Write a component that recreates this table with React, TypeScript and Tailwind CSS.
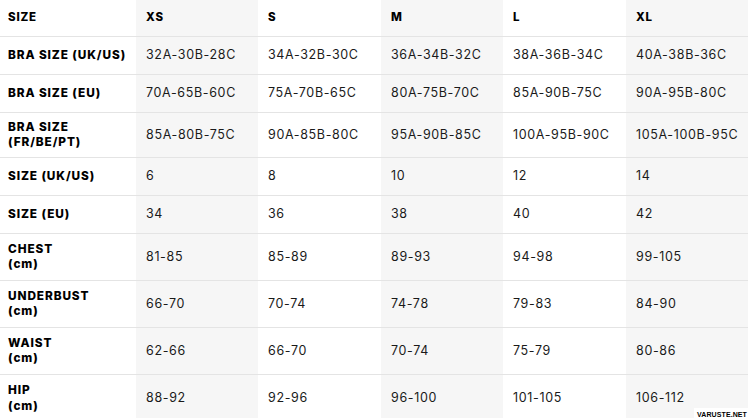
import React from "react";

const cols = [136, 122, 123, 122, 123, 122];

type Row = { label: string[]; values: string[]; h: number };

const header = ["XS", "S", "M", "L", "XL"];

const rows: Row[] = [
  { label: ["BRA SIZE (UK/US)"], values: ["32A-30B-28C", "34A-32B-30C", "36A-34B-32C", "38A-36B-34C", "40A-38B-36C"], h: 38 },
  { label: ["BRA SIZE (EU)"], values: ["70A-65B-60C", "75A-70B-65C", "80A-75B-70C", "85A-90B-75C", "90A-95B-80C"], h: 38 },
  { label: ["BRA SIZE", "(FR/BE/PT)"], values: ["85A-80B-75C", "90A-85B-80C", "95A-90B-85C", "100A-95B-90C", "105A-100B-95C"], h: 45 },
  { label: ["SIZE (UK/US)"], values: ["6", "8", "10", "12", "14"], h: 38 },
  { label: ["SIZE (EU)"], values: ["34", "36", "38", "40", "42"], h: 38 },
  { label: ["CHEST", "(cm)"], values: ["81-85", "85-89", "89-93", "94-98", "99-105"], h: 47 },
  { label: ["UNDERBUST", "(cm)"], values: ["66-70", "70-74", "74-78", "79-83", "84-90"], h: 47 },
  { label: ["WAIST", "(cm)"], values: ["62-66", "66-70", "70-74", "75-79", "80-86"], h: 47 },
  { label: ["HIP", "(cm)"], values: ["88-92", "92-96", "96-100", "101-105", "106-112"], h: 47 },
];

const font = { fontFamily: "Inter, 'Noto Sans', sans-serif" };

function Cell({ i, children, h, last }: { i: number; children: React.ReactNode; h: number; last?: boolean }) {
  const gray = i % 2 === 1;
  return (
    <div
      className={`flex items-center ${gray ? "bg-[#f6f6f6]" : "bg-white"} ${last ? "" : "border-b border-[#e4e4e4]"} ${i === 0 ? "pl-[8px]" : "pl-[10px]"}`}
      style={{ width: cols[i], height: h }}
    >
      {children}
    </div>
  );
}

export default function App() {
  return (
    <div className="relative w-[748px] h-[418px] overflow-hidden bg-white text-[#1a1a1a]" style={font}>
      <div className="flex">
        <Cell i={0} h={37}>
          <span className="text-[11.5px] font-extrabold tracking-[0.8px] text-black">SIZE</span>
        </Cell>
        {header.map((hd, k) => (
          <Cell key={hd} i={k + 1} h={37}>
            <span className="text-[11.5px] font-extrabold tracking-[0.8px] text-black">{hd}</span>
          </Cell>
        ))}
      </div>
      {rows.map((r, ri) => (
        <div className="flex" key={ri}>
          <Cell i={0} h={r.h} last={ri === rows.length - 1}>
            <div className="flex flex-col leading-[15.5px] text-[11.8px] font-extrabold tracking-[0.9px] text-black">
              {r.label.map((l, li) => (
                <span key={li} className="whitespace-nowrap">{l}</span>
              ))}
            </div>
          </Cell>
          {r.values.map((v, k) => (
            <Cell key={k} i={k + 1} h={r.h} last={ri === rows.length - 1}>
              <span className="text-[12.5px] tracking-[0.65px] whitespace-nowrap">{v}</span>
            </Cell>
          ))}
        </div>
      ))}
      <div
        className="absolute right-0 bottom-0 bg-white pl-[3px] pr-[1px] h-[10px] flex items-end text-[7px] font-bold leading-none tracking-[0.1px] text-black"
        style={{ fontFamily: "'Liberation Sans', Arial, sans-serif" }}
      >
        VARUSTE.NET
      </div>
    </div>
  );
}
